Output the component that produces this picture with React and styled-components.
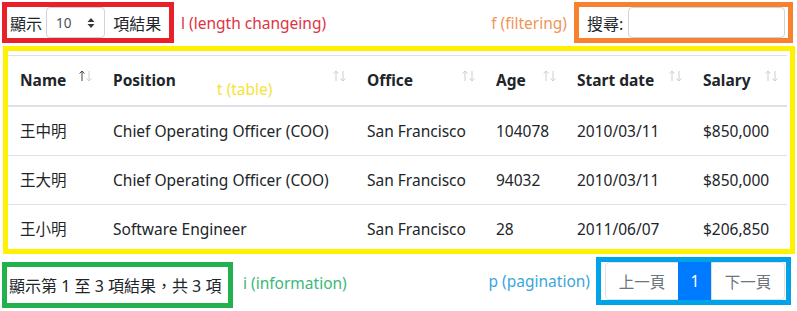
import React from "react";
import styled, { createGlobalStyle } from "styled-components";

const GlobalStyle = createGlobalStyle`
  html, body {
    margin: 0;
    padding: 0;
    background: #ffffff;
  }
  body {
    font-family: "Noto Sans", "Noto Sans CJK TC", sans-serif;
    color: #212529;
  }
`;

const CJK = `"Noto Sans", "Noto Sans CJK TC", sans-serif`;

const Page = styled.div`
  width: 797px;
  height: 311px;
  overflow: hidden;
  font-family: ${CJK};
  font-size: 16px;
`;

const TopRow = styled.div`
  display: flex;
  justify-content: space-between;
  align-items: center;
  padding: 2px 4px 0 2px;
  height: 41px;
`;

const Group = styled.div`
  display: flex;
  align-items: center;
  gap: ${(p) => p.gap || 7}px;
`;

const Frame = styled.div`
  box-sizing: border-box;
  border: ${(p) => p.weight || 5}px solid ${(p) => p.color};
  display: flex;
  align-items: center;
`;

const LengthBox = styled(Frame)`
  width: 172px;
  height: 41px;
  padding: 0 3px;
  gap: 4px;
`;

const FilterBox = styled(Frame)`
  width: 219px;
  height: 41px;
  padding: 0 3px 0 8px;
  gap: 5px;
`;

const Note = styled.span`
  color: ${(p) => p.color};
  font-size: 15.5px;
  white-space: nowrap;
`;

const Plain = styled.span`
  font-size: 16px;
  color: #212529;
  white-space: nowrap;
`;

const FakeSelect = styled.div`
  box-sizing: border-box;
  width: 59px;
  height: 31px;
  border: 1px solid #ced4da;
  border-radius: 4px;
  display: flex;
  align-items: center;
  justify-content: space-between;
  padding: 0 9px 0 9px;
  font-size: 13.5px;
  color: #495057;
`;

const SearchInput = styled.div`
  box-sizing: border-box;
  flex: 1;
  height: 31px;
  border: 1px solid #ced4da;
  border-radius: 4px;
`;

const TableBox = styled.div`
  box-sizing: border-box;
  margin: 3px 2px 0 3px;
  height: 208px;
  border: 5px solid #fff200;
  padding: 4px 3px 0 0;
  overflow: hidden;
  position: relative;
`;

const TableNote = styled(Note)`
  position: absolute;
  left: 209px;
  top: 27px;
`;

const Table = styled.table`
  width: 100%;
  border-collapse: collapse;
  table-layout: fixed;
`;

const Th = styled.th`
  box-sizing: border-box;
  height: 50px;
  padding: 0 9px 0 12px;
  text-align: left;
  font-weight: 700;
  font-size: 15.5px;
  border-top: 1px solid #dee2e6;
  border-bottom: 2px solid #dee2e6;
`;

const HeadInner = styled.div`
  display: flex;
  justify-content: space-between;
  align-items: center;
`;

const Arrows = styled.span`
  display: flex;
  gap: 1px;
  margin-top: -8px;
`;

const Arrow = styled.svg`
  width: 6px;
  height: 12px;
  opacity: ${(p) => (p.active ? 0.85 : 0.22)};
`;

const Td = styled.td`
  height: 48px;
  padding: 0 12px;
  font-size: 15.5px;
  border-top: 1px solid #dee2e6;
  white-space: nowrap;
`;

const BottomRow = styled.div`
  display: flex;
  justify-content: space-between;
  align-items: flex-start;
  padding: 3px 6px 0 2px;
`;

const InfoBox = styled(Frame)`
  margin-top: 5px;
  width: 231px;
  height: 46px;
  padding: 0 2px;
`;

const PagerBox = styled(Frame)`
  width: 195px;
  height: 48px;
  padding: 0 0 0 5px;
`;

const PageButton = styled.div`
  box-sizing: border-box;
  height: 38px;
  width: ${(p) => p.w}px;
  display: flex;
  align-items: center;
  justify-content: center;
  font-size: 15.5px;
  border: 1px solid ${(p) => (p.active ? "#007bff" : "#dee2e6")};
  margin-left: -1px;
  background: ${(p) => (p.active ? "#007bff" : "#ffffff")};
  color: ${(p) => (p.active ? "#ffffff" : "#6c757d")};
  border-radius: ${(p) => p.radius || "0"};
`;

const columns = [
  { label: "Name", w: 93, active: true },
  { label: "Position", w: 254 },
  { label: "Office", w: 129 },
  { label: "Age", w: 81 },
  { label: "Start date", w: 126 },
  { label: "Salary", w: 96 },
];

const rows = [
  ["王中明", "Chief Operating Officer (COO)", "San Francisco", "104078", "2010/03/11", "$850,000"],
  ["王大明", "Chief Operating Officer (COO)", "San Francisco", "94032", "2010/03/11", "$850,000"],
  ["王小明", "Software Engineer", "San Francisco", "28", "2011/06/07", "$206,850"],
];

function SelectCaret() {
  return (
    <svg width="8" height="12" viewBox="0 0 8 12">
      <path d="M4 1 L7.5 5 H0.5 Z" fill="#343a40" />
      <path d="M4 11 L7.5 7 H0.5 Z" fill="#343a40" />
    </svg>
  );
}

function SortArrows({ active }) {
  return (
    <Arrows>
      <Arrow active={active} viewBox="0 0 6 12">
        <path d="M3 1 V11 M0.6 3.6 L3 1 L5.4 3.6" stroke="#212529" strokeWidth="1" fill="none" />
      </Arrow>
      <Arrow viewBox="0 0 6 12">
        <path d="M3 1 V11 M0.6 8.4 L3 11 L5.4 8.4" stroke="#212529" strokeWidth="1" fill="none" />
      </Arrow>
    </Arrows>
  );
}

export default function App() {
  return (
    <Page>
      <GlobalStyle />
      <TopRow>
        <Group>
          <LengthBox color="#e8202a">
            <Plain>顯示</Plain>
            <FakeSelect>
              <span>10</span>
              <SelectCaret />
            </FakeSelect>
            <Plain>&nbsp;項結果</Plain>
          </LengthBox>
          <Note color="#dc3545">l (length changeing)</Note>
        </Group>
        <Group>
          <Note color="#f0955a">f (filtering)</Note>
          <FilterBox color="#f7812e">
            <Plain>搜尋:</Plain>
            <SearchInput />
          </FilterBox>
        </Group>
      </TopRow>

      <TableBox>
        <Table>
          <colgroup>
            {columns.map((c) => (
              <col key={c.label} style={{ width: c.w }} />
            ))}
          </colgroup>
          <thead>
            <tr>
              {columns.map((c) => (
                <Th key={c.label}>
                  <HeadInner>
                    <span>{c.label}</span>
                    <SortArrows active={c.active} />
                  </HeadInner>
                </Th>
              ))}
            </tr>
          </thead>
          <tbody>
            {rows.map((r) => (
              <tr key={r[0]}>
                {r.map((v, i) => (
                  <Td key={i}>{v}</Td>
                ))}
              </tr>
            ))}
          </tbody>
        </Table>
        <TableNote color="#f5e23c">t (table)</TableNote>
      </TableBox>

      <BottomRow>
        <Group gap={10}>
          <InfoBox color="#22b14c">
            <Plain>顯示第 1 至 3 項結果，共 3 項</Plain>
          </InfoBox>
          <Note color="#3cb878">i (information)</Note>
        </Group>
        <Group gap={6}>
          <Note color="#3aa6dd">p (pagination)</Note>
          <PagerBox color="#00a2e8">
            <PageButton w={74} radius="4px 0 0 4px">上一頁</PageButton>
            <PageButton w={34} active>1</PageButton>
            <PageButton w={74} radius="0 4px 4px 0">下一頁</PageButton>
          </PagerBox>
        </Group>
      </BottomRow>
    </Page>
  );
}
